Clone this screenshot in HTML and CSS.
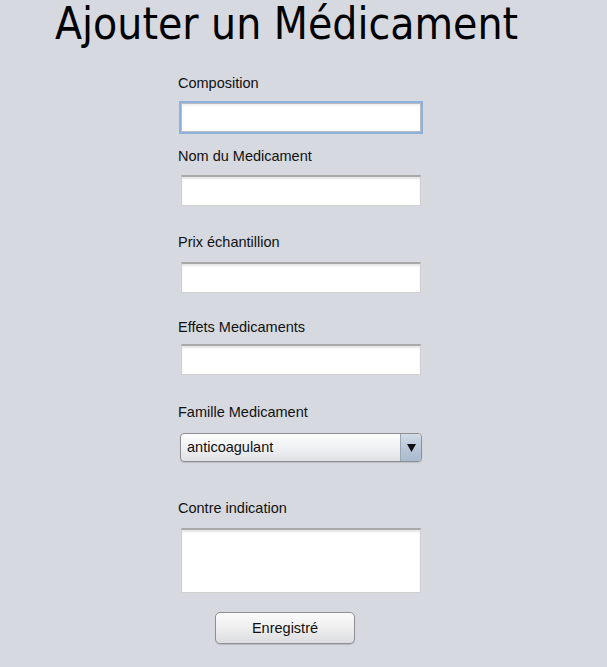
FILE: index.html
```html
<!DOCTYPE html>
<html lang="fr">
<head>
<meta charset="utf-8">
<title>Ajouter un Médicament</title>
<link rel="stylesheet" href="styles.css">
</head>
<body>
<h1 class="title">Ajouter un Médicament</h1>
<form class="form">
  <div class="group g-compo">
    <label class="lbl">Composition</label>
    <div class="field focused"></div>
  </div>
  <div class="group g-nom">
    <label class="lbl">Nom du Medicament</label>
    <div class="field"></div>
  </div>
  <div class="group g-prix">
    <label class="lbl">Prix échantillion</label>
    <div class="field"></div>
  </div>
  <div class="group g-effets">
    <label class="lbl">Effets Medicaments</label>
    <div class="field"></div>
  </div>
  <div class="group g-famille">
    <label class="lbl">Famille Medicament</label>
    <div class="select">
      <span class="select-text">anticoagulant</span>
      <span class="select-arrow"><svg width="9" height="8" viewBox="0 0 9 8"><path d="M0 0H9L4.5 8Z" fill="#111"/></svg></span>
    </div>
  </div>
  <div class="group g-contre">
    <label class="lbl">Contre indication</label>
    <div class="field area"></div>
  </div>
  <div class="btn-row">
    <button type="button" class="btn">Enregistré</button>
  </div>
</form>
</body>
</html>
```

FILE: styles.css
```css
html, body {
  margin: 0;
  padding: 0;
  background: #d6d9e0;
}
body {
  width: 607px;
  height: 667px;
  overflow: hidden;
  font-family: "Liberation Sans", Arial, sans-serif;
  color: #111;
}
.title {
  margin: 0;
  padding-left: 55px;
  padding-top: 4px;
  height: 40px;
  font-family: "DejaVu Sans Condensed", "DejaVu Sans", sans-serif;
  font-stretch: condensed;
  font-weight: normal;
  font-size: 44px;
  line-height: 40px;
  color: #000;
}
.form {
  margin-left: 178px;
  width: 246px;
  display: flex;
  flex-direction: column;
}
.lbl {
  display: block;
  font-size: 14.5px;
  line-height: 17px;
  height: 17px;
}
.group { display: flex; flex-direction: column; }
.g-compo { margin-top: 31px; }
.g-compo .lbl { margin-bottom: 9px; }
.g-nom { margin-top: 14px; }
.g-nom .lbl { margin-bottom: 10px; }
.g-prix { margin-top: 28px; }
.g-prix .lbl { margin-bottom: 11px; }
.g-effets { margin-top: 26px; }
.g-effets .lbl { margin-bottom: 8px; }
.g-famille { margin-top: 29px; }
.g-famille .lbl { margin-bottom: 12px; }
.g-contre { margin-top: 38px; }
.g-contre .lbl { margin-bottom: 11px; }

.field {
  box-sizing: border-box;
  margin-left: 3px;
  width: 240px;
  height: 31px;
  background: #fff;
  border: 1px solid #d0d0d0;
  border-top: 2px solid #a9a9a9;
  box-shadow: inset 0 2px 2px rgba(0, 0, 0, 0.10);
}
.field.focused {
  margin-left: 1px;
  width: 244px;
  height: 33px;
  border: 2px solid #8db1da;
  box-shadow: inset 0 0 0 1px #b9bdc3, inset 0 3px 2px rgba(0, 0, 0, 0.06);
}
.field.area { height: 65px; }

.select {
  box-sizing: border-box;
  margin-left: 2px;
  width: 242px;
  height: 29px;
  display: flex;
  align-items: stretch;
  border: 1px solid #8d8f93;
  border-radius: 4px;
  background: linear-gradient(#fdfdfd, #f0f1f3 50%, #dfe1e5);
  overflow: hidden;
  box-shadow: 0 1px 1px rgba(0, 0, 0, 0.12);
}
.select-text {
  flex: 1;
  padding-left: 6px;
  font-size: 14.5px;
  line-height: 27px;
}
.select-arrow {
  width: 20px;
  border-left: 1px solid #9aa6b4;
  background: linear-gradient(#d3dce7, #b7c6d7 55%, #a9bbd0);
  display: flex;
  align-items: center;
  justify-content: center;
}
.btn-row {
  display: flex;
  margin-top: 19px;
  padding-left: 37px;
}
.btn {
  box-sizing: border-box;
  width: 140px;
  height: 32px;
  border: 1px solid #8e9094;
  border-radius: 5px;
  background: linear-gradient(#fbfbfb, #eeeeef 50%, #dcdddf);
  font-family: "Liberation Sans", Arial, sans-serif;
  font-size: 14.5px;
  color: #111;
  padding: 0;
  box-shadow: 0 1px 1px rgba(0, 0, 0, 0.15);
}
```
